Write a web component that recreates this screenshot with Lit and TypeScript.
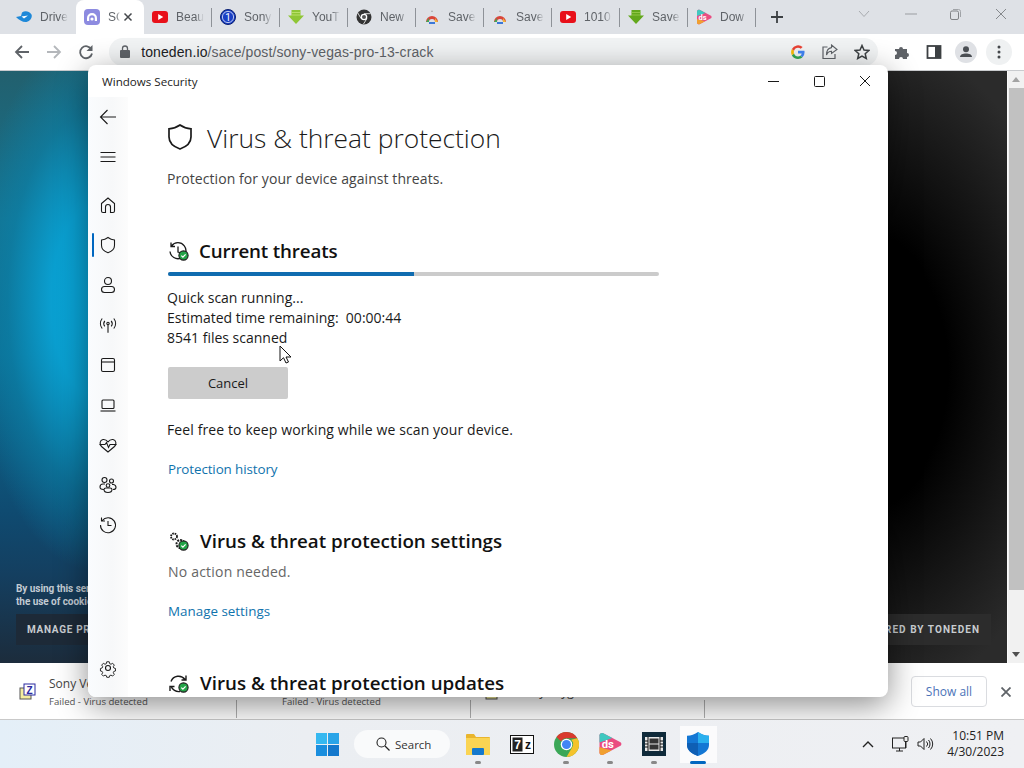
import { LitElement, html, css, svg } from "lit";
import { customElement } from "lit/decorators.js";

const yt = () => svg`<rect x="0" y="2" width="16" height="12" rx="3" fill="#e8101a"/><path d="M6.200 5v6l5-3z" fill="#fff"/>`;
const save = () => svg`<path d="M8 1l1 2H7z" fill="#aaa"/><path d="M2 13a6 6 0 0 1 12 0h-3a3 3 0 0 0-6 0z" fill="#d9453a"/><path d="M5 13h6v2H5z" fill="#3b78d8"/><path d="M11 9l3 4h-3z" fill="#f2b632"/><path d="M5 9l-3 4h3z" fill="#3fa757"/>`;
const arrowGreen = (dark = false) => svg`<path d="M3.500 1h9v5.500H16L8 15 0 6.500h3.500z" fill="${dark ? "#63a81c" : "#8fc636"}"/><path d="M3.500 3.500h9M3.500 6h9" stroke="${dark ? "#9ccc50" : "#c4e676"}" stroke-width=".8"/>`;
const dsIcon = () => svg`<path d="M3.500.8C2.500.4 1 1 1 2.200v11.600c0 1.200 1.500 1.800 2.500 1.400L15 9.200c.8-.5.8-1.900 0-2.400z" fill="#ea4c82"/><path d="M3.500.8C2.500.4 1 1 1 2.200V7l8.500-3z" fill="#3fc8c0"/><path d="M1 10v3.800c0 1.200 1.500 1.800 2.500 1.400L9 12.300z" fill="#f0a030"/><text x="2.500" y="10.600" font-size="7.500" font-weight="700" font-family="Roboto, sans-serif" fill="#fff">ds</text>`;

const chrome = () => svg`<circle cx="8" cy="8" r="8" fill="#3aa757"/><path d="M8 0a8 8 0 0 1 6.930 4H8a4 4 0 0 0-3.460 2L1.600 3.200A8 8 0 0 1 8 0z" fill="#d93a2e"/><path d="M14.930 4A8 8 0 0 1 8 16l3.460-6A4 4 0 0 0 11 5z" fill="#f5c32c"/><circle cx="8" cy="8" r="3.700" fill="#fff"/><circle cx="8" cy="8" r="2.900" fill="#4285f4"/>`;

const tabs = [
  { t: "Drive", i: svg`<path d="M0 8l5-1 1-3.500C9 1.500 13 2 15.500 5.500c1 2.500-.5 6.500-5 7.500C7 13.500 3 11 0 8z" fill="#1e88d8"/><path d="M5.500 7.500 12 6.500 8 9.500z" fill="#fff"/>` },
  { t: "SC", active: true, i: svg`<rect width="16" height="16" rx="4" fill="#8d8be0"/><path d="M3 12V9a5 5 0 0 1 10 0v3h-2.200V9a2.800 2.800 0 0 0-5.600 0v3z" fill="#fff"/><circle cx="8" cy="10" r="1.600" fill="#fff"/>` },
  { t: "Beau", i: yt() },
  { t: "Sony", i: svg`<circle cx="8" cy="8" r="7.500" fill="#1a3fc4" stroke="#0a1f70"/><circle cx="8" cy="8" r="5.600" fill="none" stroke="#fff" stroke-width=".7"/><text x="8" y="11.500" text-anchor="middle" font-size="10" font-family="Roboto, sans-serif" fill="#fff">1</text>` },
  { t: "YouT", i: arrowGreen() },
  { t: "New", i: svg`<circle cx="8" cy="8" r="7.500" fill="#333"/><circle cx="8" cy="8" r="3.300" fill="#fff"/><circle cx="8" cy="8" r="2" fill="#555"/><path d="M8 4.700h6.500" stroke="#fff" stroke-width=".8"/><path d="M5.100 9.600 1.800 4" stroke="#fff" stroke-width=".8"/><path d="M10.900 9.600 7.500 15" stroke="#fff" stroke-width=".8"/>` },
  { t: "Save", i: save() },
  { t: "Save", i: save() },
  { t: "1010", i: yt() },
  { t: "Save", i: arrowGreen(true) },
  { t: "Dow", i: dsIcon() },
];

const ok = () => svg`<circle cx="15.500" cy="14.500" r="4.600" fill="#22a447"/><path d="M13.300 14.600l1.600 1.600 2.700-2.900" fill="none" stroke="#fff" stroke-width="1.200"/>`;

const nav = [
  svg`<path d="M3.500 8.500 10 3l6.500 5.500V16a1.500 1.500 0 0 1-1.500 1.500h-2.500V12a2.500 2.500 0 0 0-5 0v5.500H5A1.500 1.500 0 0 1 3.500 16z"/>`,
  svg`<path d="M10 2.500c2 1.500 4 2.300 6.500 2.500v5.500c0 3.500-2.300 5.700-6.500 7.200-4.200-1.500-6.500-3.700-6.500-7.200V5C6 4.800 8 4 10 2.500z"/>`,
  svg`<circle cx="10" cy="6" r="3.500"/><rect x="3.500" y="11.500" width="13" height="6" rx="3"/>`,
  svg`<circle cx="10" cy="8.500" r="1.200"/><path d="M10 9.700v8M6.800 5.800a4.500 4.500 0 0 0 0 5.500M13.200 5.800a4.500 4.500 0 0 1 0 5.500M4.200 3.500a8 8 0 0 0 0 10M15.800 3.500a8 8 0 0 1 0 10"/>`,
  svg`<rect x="3.500" y="3.500" width="13" height="13" rx="1.500"/><path d="M3.500 7h13"/>`,
  svg`<rect x="4" y="5" width="12" height="8.500" rx="1"/><path d="M2.500 16h15"/>`,
  svg`<path d="M10 17 3.500 11.500C1 9 2 5 5 4.500c2-.3 3.700.7 5 2.300 1.300-1.600 3-2.600 5-2.300 3 .5 4 4.500 1.500 7z"/><path d="M1.500 9.500H7l1.500-2 2 5 1.500-3h6.500"/>`,
  svg`<circle cx="6.500" cy="5" r="2.500"/><circle cx="13.500" cy="6" r="2"/><circle cx="10" cy="10.500" r="1.800"/><path d="M7 9H5a3 3 0 0 0-3 3c0 1.500 1.500 2.500 3.500 2.500M14 9.500h1.500a3 3 0 0 1 2.500 3c0 1.500-1.500 2-3 2M6 14.500c0 2 2 3 4 3s4-1 4-3c0-1-1-1.500-2-1.500H8c-1 0-2 .5-2 1.500z"/>`,
  svg`<path d="M4.200 5.500A7.500 7.500 0 1 1 2.500 10M3.500 2.500v3.500h3.500M10 6v4.500h3.500"/>`,
];

const gear = svg`<path d="M8.500 2.500h3l.5 2.300 1.600.7 2-1.200 2 2.200-1.200 1.900.6 1.600 2 .6v3l-2 .5-.6 1.600 1.200 2-2 2-2-1.100-1.600.6-.5 2h-3l-.5-2-1.600-.6-2 1.100-2-2 1.200-2-.7-1.600-2-.5v-3l2-.6.700-1.600L2.400 6.500l2-2.200 2 1.200 1.600-.7z" transform="translate(1.700 1.700) scale(.83)"/><circle cx="10" cy="10" r="2.500"/>`;

const zipIcon = svg`<rect x="1" y="5" width="11" height="11" fill="#f4ee9e" stroke="#555"/><rect x="5" y="1" width="11" height="11" fill="#fff" stroke="#2a2aa0"/><text x="10.500" y="10.500" text-anchor="middle" font-size="10" font-weight="700" font-family="Liberation Sans, sans-serif" fill="#2a2aa0">Z</text>`;

@customElement("app-root")
export class AppRoot extends LitElement {
  static styles = css`
    :host { display: block; width: 1024px; height: 768px; overflow: hidden; font-family: "Open Sans", "Noto Sans", sans-serif; color: #1a1a1a; }
    svg { display: block; flex: none; }

    .browser { position: relative; height: 720px; overflow: hidden; display: flex; flex-direction: column; background: #fff; }

    .tabbar { height: 34px; background: #dee1e6; display: flex; align-items: stretch; padding-left: 8px; flex: none; }
    .tab { width: 68px; display: flex; align-items: center; padding-left: 8px; gap: 8px; box-sizing: border-box; position: relative; color: #5f6368; font: 12px "Liberation Sans", sans-serif; }
    .tab.sep::after { content: ""; position: absolute; right: 0; top: 8px; height: 19px; width: 1px; background: #8e9298; }
    .tab.on { background: #fff; border-radius: 8px 8px 0 0; }
    .tab-t { width: 28px; white-space: nowrap; overflow: hidden; -webkit-mask-image: linear-gradient(90deg, #000 70%, transparent); mask-image: linear-gradient(90deg, #000 70%, transparent); }
    .tab.on .tab-t { width: 12px; }
    .tab-x { margin-left: -5px; }
    .plus { margin-left: 14px; align-self: center; }
    .winbtns { margin-left: auto; display: flex; align-items: center; gap: 0; padding: 0 1px 6px 0; }
    .winbtn { width: 45px; display: flex; justify-content: center; }
    .winbtn.chev { margin-right: 2px; }

    .toolbar { height: 37px; box-sizing: border-box; border-bottom: 1px solid #c9cbce; display: flex; align-items: center; padding: 0 12px 0 12px; flex: none; background: #fff; }
    .tool { width: 20px; height: 20px; display: flex; align-items: center; justify-content: center; }
    .nav-tools { display: flex; gap: 12px; width: 98px; }
    .omni { width: 775px; height: 28px; background: #f1f3f4; border-radius: 14px; display: flex; align-items: center; padding-left: 10px; box-sizing: border-box; gap: 10px; font: 14px "Liberation Sans", sans-serif; color: #5f6368; }
    .omni b { font-weight: 400; color: #202124; }
    .url { flex: 1; letter-spacing: .1px; }
    .omni-r { display: flex; gap: 12px; padding-right: 6px; }
    .tools-r { display: flex; align-items: center; gap: 12px; margin-left: 14px; }
    .more { width: 26px; height: 26px; border-radius: 50%; background: #eff1f2; display: flex; align-items: center; justify-content: center; margin-left: -2px; }

    .content { flex: 1; display: flex; min-height: 0; }
    .page { flex: 1; display: flex; flex-direction: column; justify-content: flex-end; padding: 0 16px 18px; box-sizing: border-box;
      background:
        radial-gradient(ellipse 125px 270px at 95px 230px, #08a8dc 0%, #0a9fd0 35%, rgba(11,130,170,.6) 70%, rgba(12,100,140,0) 100%),
        linear-gradient(180deg, #22606e 0%, #15728f 25%, #0c6d92 48%, #0f4a70 75%, #143f60 85%, #1c2c3c 100%),
        radial-gradient(ellipse 220px 340px at 860px 300px, #000 40%, #2b2b2b 100%);
      background-size: 100% 100%, 400px 100%, 100% 100%;
      background-repeat: no-repeat;
    }
    .cookie-text { font: 700 10px/13px Roboto, sans-serif; letter-spacing: -.05px; color: #c3cbd3; margin-bottom: 6px; }
    .cookie-row { display: flex; justify-content: space-between; font: 700 10px Roboto, sans-serif; color: #c8ccd0; }
    .cookie-btn { height: 31px; display: flex; align-items: center; padding: 0 11px; background: #1d2a38; letter-spacing: .7px; }
    .cookie-btn.right { background: #2c2c2c; letter-spacing: 1.050px; }
    .scroll { width: 16px; background: #f1f1f1; display: flex; flex-direction: column; align-items: center; border-left: 1px solid #fafafa; }
    .arrow { height: 17px; display: flex; align-items: center; justify-content: center; flex: none; }
    .thumb { width: 15px; height: 502px; background: #c1c1c1; flex: none; }
    .gap { flex: 1; }

    .dl { height: 57px; flex: none; background: #fff; border-top: 1px solid #fff; border-bottom: 1px solid #c9c9c9; box-sizing: border-box; display: flex; align-items: stretch; font-family: "Open Sans", sans-serif; }
    .dl-item { width: 234px; box-sizing: border-box; display: flex; align-items: center; padding-left: 19px; gap: 12px; position: relative; flex: none; }
    .dl-item::after { content: ""; position: absolute; right: 0; top: 36px; height: 18px; width: 1px; background: #b0b0b0; }
    .dl-item.first { width: 237px; }
    .dl-item.plain { padding-left: 45px; }
    .dl-item.third { padding-left: 14px; gap: 15px; }
    .dl-txt { padding-top: 1px; }
    .dl-name { font-size: 12px; color: #444; line-height: 20px; white-space: nowrap; }
    .dl-sub { font-size: 9.600px; color: #555; line-height: 16px; white-space: nowrap; }
    .dl-right { margin-left: auto; display: flex; align-items: center; gap: 14px; padding-right: 13px; }
    .show { width: 76px; height: 31px; box-sizing: border-box; border: 1px solid #dadce0; border-radius: 4px; color: #4b73b8; font-size: 12px; display: flex; align-items: center; justify-content: center; }

    .win { position: absolute; left: 88px; top: 65px; width: 800px; height: 632px; background: #fff; border-radius: 8px; box-shadow: 0 8px 32px rgba(0,0,0,.45); display: flex; flex-direction: column; overflow: hidden; }
    .titlebar { height: 32px; flex: none; display: flex; align-items: center; padding: 1px 0 0 14px; box-sizing: border-box; font-size: 11.600px; color: #222; }
    .title-btns { margin-left: auto; display: flex; align-items: center; margin-top: -1px; }
    .title-btn { width: 46px; display: flex; justify-content: center; align-items: center; }
    .win-body { flex: 1; display: flex; min-height: 0; }
    .rail { width: 40px; flex: none; display: flex; flex-direction: column; background: linear-gradient(90deg, #fafcfe, #f7f8f9 60%, #fcfcfc); }
    .ri { height: 40px; flex: none; display: flex; align-items: center; justify-content: center; position: relative; }
    .ri.top-gap { margin-top: 8px; }
    .ri.on::before { content: ""; position: absolute; left: 4px; top: 8px; width: 2px; height: 24px; background: #0067c0; border-radius: 1px; }
    .rail-end { margin-top: auto; margin-bottom: 9px; }
    .ico { fill: none; stroke: #1a1a1a; stroke-width: 1.100; }

    .main { flex: 1; padding: 21px 0 0 39px; overflow: hidden; min-width: 0; }
    .hero { display: flex; align-items: center; height: 40px; gap: 14px; }
    .hero svg { margin-top: -2px; }
    h1 { margin: 0; font-weight: 300; font-size: 26.400px; color: #1a1a1a; white-space: nowrap; }
    p { margin: 0; font-size: 14px; line-height: 20px; white-space: nowrap; }
    .sub { margin-top: 11px; color: #444; letter-spacing: .07px; }
    .sec { display: flex; align-items: center; gap: 11px; height: 28px; margin: 48px 0 0 1px; flex: none; }
    h2 { margin: 0; font-weight: 600; font-size: 18.750px; line-height: 28px; color: #111; white-space: nowrap; }
    h2.tight { letter-spacing: -.15px; margin-left: -1px; }
    .bar { width: 491px; height: 4px; margin: 7px 0 12px 1px; background: #cbcbcb; border-radius: 2px; overflow: hidden; }
    .fill { height: 100%; background: #0f6cb0; }
    .cancel { width: 120px; height: 32px; margin: 19px 0 21px 1px; background: #cccccc; border: 0; border-radius: 2px; font: 13px/32px "Open Sans", sans-serif; color: #1a1a1a; padding: 0; display: block; }
    .free { letter-spacing: .11px; }
    .link { color: #0f73ad; margin: 19px 0 0 1px; font-size: 13.400px; }
    .link.hist { letter-spacing: -.1px; }
    .muted { color: #666; margin: 7px 0 0 1px; letter-spacing: .2px; }
    .cursor { position: absolute; left: 191px; top: 280px; }

    .taskbar { height: 48px; display: flex; align-items: center; background: linear-gradient(90deg, #e4eff8, #ebeef2 30%, #eff0f3); padding-left: 316px; box-sizing: border-box; position: relative; }
    .search { width: 96px; height: 28px; margin-left: 15px; border-radius: 14px; background: #f9fafb; display: flex; align-items: center; gap: 5px; padding-left: 22px; box-sizing: border-box; font-size: 11.500px; color: #333; }
    .apps { display: flex; margin-left: 6px; gap: 0; }
    .app { width: 44px; height: 37px; box-sizing: border-box; display: flex; align-items: center; justify-content: center; position: relative; }
    .app::after { content: ""; position: absolute; bottom: -1px; left: 19px; width: 6px; height: 3px; border-radius: 2px; background: #888; }
    .app.none::after { display: none; }
    .app.cur { padding: 0 3.500px; background: rgba(255,255,255,.75); background-clip: content-box; }
    .app.cur::after { left: 14px; width: 16px; background: #0067c0; }
    .tray { margin-left: auto; display: flex; align-items: center; padding-right: 20px; }
    .clock { font-size: 12px; line-height: 16px; text-align: right; margin-left: 13px; color: #222; }
    .tray-i { margin-right: 7px; }
    .tray-chev { margin-right: 18px; }
  `;

  render() {
    const s = (d: unknown, size = 20) => html`<svg class="ico" width="${size}" height="${size}" viewBox="0 0 20 20">${d}</svg>`;
    return html`
      <div class="browser">
        <div class="tabbar">
          ${tabs.map((t, i) => html`<div class="tab ${t.active ? "on" : ""} ${i >= 2 ? "sep" : ""}">
            <svg width="16" height="16" viewBox="0 0 16 16">${t.i}</svg>
            <span class="tab-t">${t.t}</span>
            ${t.active ? html`<svg class="tab-x" width="10" height="10" viewBox="0 0 10 10"><path d="M1.500 1.500l7 7M8.500 1.500l-7 7" stroke="#45484c" stroke-width="1.500"/></svg>` : ""}
          </div>`)}
          <svg class="plus" width="14" height="14" viewBox="0 0 14 14"><path d="M7 1v12M1 7h12" stroke="#3c4043" stroke-width="1.800"/></svg>
          <div class="winbtns">
            <div class="winbtn chev"><svg width="12" height="8" viewBox="0 0 12 8"><path d="M1 1l5 5.500L11 1" fill="none" stroke="#a9acb0"/></svg></div>
            <div class="winbtn"><svg width="12" height="2" viewBox="0 0 12 2"><path d="M0 1h12" stroke="#9a9da1"/></svg></div>
            <div class="winbtn"><svg width="11" height="11" viewBox="0 0 11 11"><rect x=".5" y="2" width="8" height="8.500" rx="1.500" fill="none" stroke="#808387"/><path d="M3 .5h5.500a2 2 0 0 1 2 2V8" fill="none" stroke="#a0a3a7"/></svg></div>
            <div class="winbtn"><svg width="12" height="12" viewBox="0 0 12 12"><path d="M1 1l10 10M11 1 1 11" stroke="#85888c"/></svg></div>
          </div>
        </div>

        <div class="toolbar">
          <div class="nav-tools">
            <div class="tool"><svg width="16" height="16" viewBox="0 0 16 16"><path d="M15 8H2M8 2 2 8l6 6" fill="none" stroke="#5f6368" stroke-width="1.800"/></svg></div>
            <div class="tool"><svg width="16" height="16" viewBox="0 0 16 16"><path d="M1 8h13M8 2l6 6-6 6" fill="none" stroke="#b4b7bb" stroke-width="1.800"/></svg></div>
            <div class="tool"><svg width="16" height="16" viewBox="0 0 16 16"><path d="M13.500 5.500A6 6 0 1 0 14 9.500" fill="none" stroke="#5f6368" stroke-width="1.800"/><path d="M14.500 1v6h-6z" fill="#5f6368"/></svg></div>
          </div>
          <div class="omni">
            <svg width="12" height="14" viewBox="0 0 12 14"><rect x="1" y="5" width="10" height="8" rx="1" fill="#5f6368"/><path d="M3.500 5V3.500a2.500 2.500 0 0 1 5 0V5" fill="none" stroke="#5f6368" stroke-width="1.300"/></svg>
            <span class="url"><b>toneden.io</b>/sace/post/sony-vegas-pro-13-crack</span>
            <div class="omni-r">
              <div class="tool"><svg width="14" height="14" viewBox="0 0 16 16"><path d="M15.500 8.200c0-.6 0-1.100-.2-1.600H8v3h4.200a3.600 3.600 0 0 1-1.500 2.400l2.400 1.900a7.400 7.400 0 0 0 2.400-5.700z" fill="#4285f4"/><path d="M8 16c2.100 0 3.800-.7 5.100-1.900L10.700 12.200c-.7.500-1.600.8-2.700.8a4.800 4.800 0 0 1-4.500-3.300l-2.500 2A8 8 0 0 0 8 16z" fill="#34a853"/><path d="M3.500 9.700a4.800 4.800 0 0 1 0-3.100l-2.500-2a8 8 0 0 0 0 7.100z" fill="#fbbc05"/><path d="M8 3.200c1.200 0 2.300.4 3.100 1.200l2.200-2.200A8 8 0 0 0 1 4.600l2.500 2A4.800 4.800 0 0 1 8 3.200z" fill="#ea4335"/></svg></div>
              <div class="tool"><svg width="16" height="16" viewBox="0 0 16 16"><path d="M5.500 3H1v11.500h12V10" fill="none" stroke="#5f6368" stroke-width="1.200"/><path d="M9.500 1 15 5.500 9.500 9.500V7.300C7 7.300 5.500 8.500 4.500 11 4.500 7 6.500 4 9.500 3.600z" fill="none" stroke="#5f6368" stroke-width="1.100"/></svg></div>
              <div class="tool"><svg width="16" height="16" viewBox="0 0 16 16"><path d="M8 1.500 10 6l4.800.5-3.600 3.200 1.100 4.800L8 12l-4.300 2.500 1.100-4.800L1.200 6.500 6 6z" fill="none" stroke="#3c4043" stroke-width="1.500"/></svg></div>
            </div>
          </div>
          <div class="tools-r">
            <div class="tool"><svg width="16" height="16" viewBox="0 0 16 16"><path d="M1 5h4a2 2 0 1 1 4 0h4v4a2 2 0 1 1 0 4v2H9a2 2 0 1 0-4 0H1v-4a2 2 0 1 0 0-4z" fill="#5f6368"/></svg></div>
            <div class="tool"><svg width="16" height="16" viewBox="0 0 16 16"><rect x="1.500" y="2" width="13" height="12" fill="none" stroke="#3c4043" stroke-width="1.800"/><rect x="9" y="2" width="5.500" height="12" fill="#3c4043"/></svg></div>
            <div class="tool"><svg width="22" height="22" viewBox="0 0 22 22"><circle cx="11" cy="11" r="11" fill="#dfe1e5"/><circle cx="11" cy="8.300" r="3" fill="#4a4e53"/><path d="M5 16c0-2.500 3-3.500 6-3.500s6 1 6 3.500z" fill="#4a4e53"/></svg></div>
            <div class="more"><svg width="4" height="14" viewBox="0 0 4 14"><circle cx="2" cy="2" r="1.500" fill="#45484c"/><circle cx="2" cy="7" r="1.500" fill="#45484c"/><circle cx="2" cy="12" r="1.500" fill="#45484c"/></svg></div>
          </div>
        </div>

        <div class="content">
          <div class="page">
            <div class="cookie-text">By using this service you agree to<br />the use of cookies on this page</div>
            <div class="cookie-row">
              <div class="cookie-btn">MANAGE PREFERENCES</div>
              <div class="cookie-btn right">POWERED BY TONEDEN</div>
            </div>
          </div>
          <div class="scroll">
            <div class="arrow"><svg width="8" height="5" viewBox="0 0 8 5"><path d="M4 0l4 5H0z" fill="#a3a3a3"/></svg></div>
            <div class="thumb"></div>
            <div class="gap"></div>
            <div class="arrow"><svg width="8" height="5" viewBox="0 0 8 5"><path d="M0 0h8L4 5z" fill="#505050"/></svg></div>
          </div>
        </div>

        <div class="dl">
          <div class="dl-item first">
            <svg width="18" height="18" viewBox="0 0 18 18">${zipIcon}</svg>
            <div class="dl-txt"><div class="dl-name">Sony Vegas Pro</div><div class="dl-sub">Failed - Virus detected</div></div>
          </div>
          <div class="dl-item plain"><div class="dl-txt"><div class="dl-name">&nbsp;</div><div class="dl-sub">Failed - Virus detected</div></div></div>
          <div class="dl-item third">
            <svg width="18" height="18" viewBox="0 0 18 18">${zipIcon}</svg>
            <div class="dl-name">Sony keygen</div>
          </div>
          <div class="dl-right">
            <div class="show">Show all</div>
            <svg width="10" height="10" viewBox="0 0 10 10"><path d="M.5.500l9 9M9.500.500l-9 9" stroke="#5f6368" stroke-width="1.800"/></svg>
          </div>
        </div>

        <div class="win">
          <div class="titlebar">
            Windows Security
            <div class="title-btns">
              <div class="title-btn"><svg width="11" height="1" viewBox="0 0 11 1"><path d="M0 .5h11" stroke="#1a1a1a"/></svg></div>
              <div class="title-btn"><svg width="11" height="11" viewBox="0 0 11 11"><rect x=".5" y=".5" width="10" height="10" rx="1" fill="none" stroke="#1a1a1a"/></svg></div>
              <div class="title-btn"><svg width="12" height="12" viewBox="0 0 12 12"><path d="M1 1l10 10M11 1 1 11" stroke="#1a1a1a"/></svg></div>
            </div>
          </div>
          <div class="win-body">
            <div class="rail">
              <div class="ri"><svg class="ico" width="20" height="20" viewBox="0 0 20 20"><path d="M18 10H2.500M9.500 3 2.500 10l7 7"/></svg></div>
              <div class="ri"><svg class="ico" width="20" height="20" viewBox="0 0 20 20"><path d="M2.500 5.500h15M2.500 10h15M2.500 14.500h15"/></svg></div>
              ${nav.map((d, i) => html`<div class="ri ${i === 0 ? "top-gap" : ""} ${i === 1 ? "on" : ""}">${s(d)}</div>`)}
              <div class="ri rail-end">${s(gear)}</div>
            </div>
            <div class="main">
              <div class="hero">
                <svg class="ico" width="26" height="28" viewBox="0 0 26 28"><path d="M13 2c3.200 2.300 6.400 3.500 11 3.800V14c0 5.500-3.500 9.300-11 12C5.500 23.300 2 19.500 2 14V5.800C6.600 5.500 9.800 4.300 13 2z" stroke-width="1.700"/></svg>
                <h1>Virus &amp; threat protection</h1>
              </div>
              <p class="sub">Protection for your device against threats.</p>

              <div class="sec">
                <svg class="ico" width="21" height="21" viewBox="0 0 21 21"><path d="M3.500 5a8 8 0 1 1-1.500 5.500M3 1.500V5.500h4M10 5.500V11l3 1" stroke-width="1.300"/>${ok()}</svg>
                <h2 class="tight">Current threats</h2>
              </div>
              <div class="bar"><div class="fill" style="width: 50%"></div></div>
              <p>Quick scan running...</p>
              <p>Estimated time remaining:&nbsp; 00:00:44</p>
              <p>8541 files scanned</p>
              <button class="cancel">Cancel</button>
              <p class="free">Feel free to keep working while we scan your device.</p>
              <p class="link hist">Protection history</p>

              <div class="sec">
                <svg class="ico" width="21" height="21" viewBox="0 0 21 21"><circle cx="6" cy="5.500" r="3" stroke-width="1.800" stroke-dasharray="1.600 .8"/><circle cx="12.500" cy="13" r="4" stroke-width="2" stroke-dasharray="2 1"/>${ok()}</svg>
                <h2>Virus &amp; threat protection settings</h2>
              </div>
              <p class="muted">No action needed.</p>
              <p class="link">Manage settings</p>

              <div class="sec">
                <svg class="ico" width="21" height="21" viewBox="0 0 21 21"><path d="M3 8.500A8 8 0 0 1 17 6.500M18 2.500V7h-4.500M3 13a8 8 0 0 0 9 5.500M2 18v-4.500h4.500" stroke-width="1.400"/>${ok()}</svg>
                <h2>Virus &amp; threat protection updates</h2>
              </div>
            </div>
          </div>
          <svg class="cursor" width="13" height="19" viewBox="0 0 13 19"><path d="M1 1v15l3.500-3.300L7 18l2.500-1-2.500-5h5z" fill="#fff" stroke="#111"/></svg>
        </div>
      </div>

      <div class="taskbar">
        <svg width="23" height="23" viewBox="0 0 23 23"><rect width="11" height="11" fill="#35b8f0"/><rect x="12" width="11" height="11" fill="#29a4e8"/><rect y="12" width="11" height="11" fill="#1a8ede"/><rect x="12" y="12" width="11" height="11" fill="#1478cc"/></svg>
        <div class="search">
          <svg width="14" height="14" viewBox="0 0 14 14"><circle cx="5.500" cy="5.500" r="4.500" fill="none" stroke="#222" stroke-width="1.100"/><path d="M9 9l4.500 4.500" stroke="#222" stroke-width="1.200"/></svg>
          Search
        </div>
        <div class="apps">
          <div class="app"><svg width="24" height="22" viewBox="0 0 24 22"><path d="M0 2a1 1 0 0 1 1-1h7l2 3h13a1 1 0 0 1 1 1v16H0z" fill="#e9b52d"/><rect y="5" width="24" height="17" fill="#fad453"/><rect x="6" y="15" width="12" height="7" rx="1" fill="#1478cc"/></svg></div>
          <div class="app none"><svg width="24" height="19" viewBox="0 0 24 19"><rect x=".5" y=".5" width="23" height="18" fill="#fff" stroke="#111"/><rect x="2.500" y="2.500" width="10" height="14" fill="#222"/><text x="7.500" y="14" text-anchor="middle" font-size="12" font-weight="700" font-family="Liberation Sans, sans-serif" fill="#fff">7</text><text x="18" y="14" text-anchor="middle" font-size="12" font-weight="700" font-family="Liberation Sans, sans-serif" fill="#111">z</text></svg></div>
          <div class="app"><svg width="25" height="25" viewBox="0 0 16 16">${chrome()}</svg></div>
          <div class="app"><svg width="24" height="24" viewBox="0 0 16 16">${dsIcon()}</svg></div>
          <div class="app"><svg width="24" height="24" viewBox="0 0 24 24"><rect width="24" height="24" fill="#0f2a3a"/><rect x="3" y="5" width="18" height="14" fill="#e8e8e8"/><path d="M6 5v14M18 5v14M6 9H3M6 12H3M6 15H3M21 9h-3M21 12h-3M21 15h-3" stroke="#111"/><rect x="7.500" y="6.500" width="9" height="5" fill="#333"/><rect x="7.500" y="12.500" width="9" height="5" fill="#333"/></svg></div>
          <div class="app cur"><svg width="22" height="26" viewBox="0 0 24 26"><path d="M12 0c3.500 2.500 7.500 4 12 4v10c0 5.500-4.500 9.500-12 12C4.500 23.500 0 19.500 0 14V4c4.500 0 8.500-1.500 12-4z" fill="#1477d4"/><path d="M12 0c3.500 2.500 7.500 4 12 4v8H12z" fill="#2ab0ee"/><path d="M0 12h12v14C4.500 23.500 0 19.500 0 14z" fill="#0f5fb4"/></svg></div>
        </div>
        <div class="tray">
          <svg class="tray-chev" width="12" height="7" viewBox="0 0 12 7"><path d="M1 6l5-5 5 5" fill="none" stroke="#222" stroke-width="1.400"/></svg>
          <svg class="tray-i" width="18" height="16" viewBox="0 0 18 16"><rect x=".5" y="2" width="13" height="10" fill="none" stroke="#222"/><path d="M4 15h7M7.500 12v3" stroke="#222"/><rect x="12" y=".5" width="4" height="5" rx="1" fill="#eee" stroke="#222"/><path d="M14 5.500V12" stroke="#222"/></svg>
          <svg width="17" height="14" viewBox="0 0 17 14"><path d="M1 5v4h2.500L7 12.500v-11L3.500 5z" fill="none" stroke="#222"/><path d="M9.500 4.500a3.500 3.500 0 0 1 0 5M11.500 3a6 6 0 0 1 0 8M13.500 1.500a8 8 0 0 1 0 11" fill="none" stroke="#222"/></svg>
          <div class="clock">10:51 PM<br />4/30/2023</div>
        </div>
      </div>
    `;
  }
}
